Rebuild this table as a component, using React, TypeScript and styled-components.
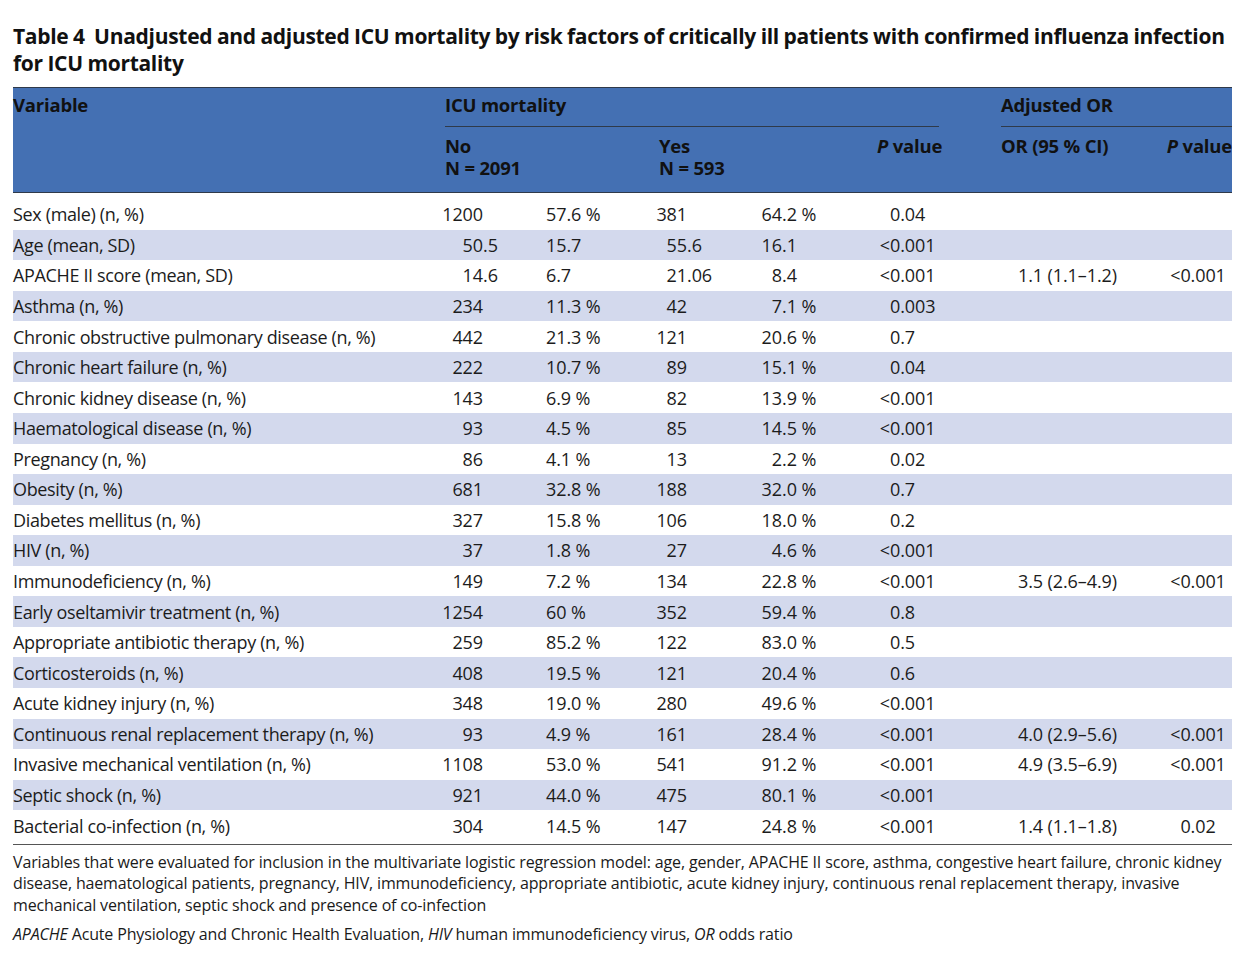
import { FC } from "react";
import styled, { createGlobalStyle } from "styled-components";

const GlobalStyle = createGlobalStyle`
  body {
    margin: 0;
    background: #ffffff;
    font-family: "Open Sans", "Noto Sans", sans-serif;
    color: #1a1a1a;
  }
`;

type Row = {
  label: string;
  noN: string;
  noPct: string;
  yesN: string;
  yesPct: string;
  p: string;
  or?: string;
  adjP?: string;
};

const rows: Row[] = [
  { label: "Sex (male) (n, %)", noN: "1200", noPct: "57.6 %", yesN: "381", yesPct: "64.2 %", p: "0.04" },
  { label: "Age (mean, SD)", noN: "50.5", noPct: "15.7", yesN: "55.6", yesPct: "16.1", p: "<0.001" },
  { label: "APACHE II score (mean, SD)", noN: "14.6", noPct: "6.7", yesN: "21.06", yesPct: "8.4", p: "<0.001", or: "1.1 (1.1–1.2)", adjP: "<0.001" },
  { label: "Asthma (n, %)", noN: "234", noPct: "11.3 %", yesN: "42", yesPct: "7.1 %", p: "0.003" },
  { label: "Chronic obstructive pulmonary disease (n, %)", noN: "442", noPct: "21.3 %", yesN: "121", yesPct: "20.6 %", p: "0.7" },
  { label: "Chronic heart failure (n, %)", noN: "222", noPct: "10.7 %", yesN: "89", yesPct: "15.1 %", p: "0.04" },
  { label: "Chronic kidney disease (n, %)", noN: "143", noPct: "6.9 %", yesN: "82", yesPct: "13.9 %", p: "<0.001" },
  { label: "Haematological disease (n, %)", noN: "93", noPct: "4.5 %", yesN: "85", yesPct: "14.5 %", p: "<0.001" },
  { label: "Pregnancy (n, %)", noN: "86", noPct: "4.1 %", yesN: "13", yesPct: "2.2 %", p: "0.02" },
  { label: "Obesity (n, %)", noN: "681", noPct: "32.8 %", yesN: "188", yesPct: "32.0 %", p: "0.7" },
  { label: "Diabetes mellitus (n, %)", noN: "327", noPct: "15.8 %", yesN: "106", yesPct: "18.0 %", p: "0.2" },
  { label: "HIV (n, %)", noN: "37", noPct: "1.8 %", yesN: "27", yesPct: "4.6 %", p: "<0.001" },
  { label: "Immunodeficiency (n, %)", noN: "149", noPct: "7.2 %", yesN: "134", yesPct: "22.8 %", p: "<0.001", or: "3.5 (2.6–4.9)", adjP: "<0.001" },
  { label: "Early oseltamivir treatment (n, %)", noN: "1254", noPct: "60 %", yesN: "352", yesPct: "59.4 %", p: "0.8" },
  { label: "Appropriate antibiotic therapy (n, %)", noN: "259", noPct: "85.2 %", yesN: "122", yesPct: "83.0 %", p: "0.5" },
  { label: "Corticosteroids (n, %)", noN: "408", noPct: "19.5 %", yesN: "121", yesPct: "20.4 %", p: "0.6" },
  { label: "Acute kidney injury (n, %)", noN: "348", noPct: "19.0 %", yesN: "280", yesPct: "49.6 %", p: "<0.001" },
  { label: "Continuous renal replacement therapy (n, %)", noN: "93", noPct: "4.9 %", yesN: "161", yesPct: "28.4 %", p: "<0.001", or: "4.0 (2.9–5.6)", adjP: "<0.001" },
  { label: "Invasive mechanical ventilation (n, %)", noN: "1108", noPct: "53.0 %", yesN: "541", yesPct: "91.2 %", p: "<0.001", or: "4.9 (3.5–6.9)", adjP: "<0.001" },
  { label: "Septic shock (n, %)", noN: "921", noPct: "44.0 %", yesN: "475", yesPct: "80.1 %", p: "<0.001" },
  { label: "Bacterial co-infection (n, %)", noN: "304", noPct: "14.5 %", yesN: "147", yesPct: "24.8 %", p: "<0.001", or: "1.4 (1.1–1.8)", adjP: "0.02" },
];

// var | noN | noPct | yesN | yesPct | p | or | adjP
const COLUMNS = "432px 101px 113px 104px 114px 124px 159px 72px";

const Page = styled.div`
  width: 1219px;
  padding: 23px 0 0 13px;
`;

const Title = styled.h1`
  margin: 0;
  font-size: 21px;
  line-height: 27px;
  font-weight: 700;
  color: #111;
  letter-spacing: -0.3px;
  word-spacing: -0.5px;
`;

const Header = styled.div`
  margin-top: 10px;
  display: grid;
  grid-template-columns: ${COLUMNS};
  grid-template-rows: 39px 65px;
  background: #4470b3;
  border-top: 1.5px solid #2f3a4a;
  border-bottom: 1.5px solid #2f3a4a;
  font-size: 18.5px;
  font-weight: 700;
  letter-spacing: -0.2px;
  color: #111;
`;

const HeadCell = styled.div<{ $span?: number; $align?: "left" | "right"; $padRight?: number }>`
  grid-column: span ${(p) => p.$span ?? 1};
  text-align: ${(p) => p.$align ?? "left"};
  padding-right: ${(p) => p.$padRight ?? 0}px;
  padding-top: 8px;
  line-height: 22px;
  white-space: nowrap;
`;

const HeadLine = styled.div`
  height: 22px;
`;

const GroupCell = styled.div<{ $span: number; $lineEnd: number }>`
  grid-column: span ${(p) => p.$span};
  display: flex;
  flex-direction: column;
  padding-right: ${(p) => p.$lineEnd}px;
`;

const GroupLabel = styled.div`
  flex: 1;
  line-height: 22px;
  padding-top: 6px;
`;

const GroupRule = styled.div`
  height: 1px;
  background: #2f3a4a;
`;

const Body = styled.div`
  padding: 6px 0 3px;
  border-bottom: 1px solid #555;
`;

const BodyRow = styled.div<{ $striped: boolean }>`
  display: grid;
  grid-template-columns: ${COLUMNS};
  height: 30.57px;
  align-items: center;
  background: ${(p) => (p.$striped ? "#d3d9ed" : "transparent")};
  font-size: 18px;
  font-weight: 400;
  color: #1c1c1c;
`;

const LabelCell = styled.div`
  letter-spacing: -0.35px;
  white-space: nowrap;
`;

const Cell = styled.div<{ $align?: "left" | "center" | "right"; $padLeft?: number }>`
  text-align: ${(p) => p.$align ?? "left"};
  padding-left: ${(p) => p.$padLeft ?? 0}px;
  letter-spacing: -0.1px;
  white-space: nowrap;
`;

// whole-number part with a fixed right edge, so the decimal points line up
const IntPart = styled.span<{ $width: number }>`
  display: inline-flex;
  justify-content: flex-end;
  width: ${(p) => p.$width}px;
`;

const LessThan = styled.span`
  display: inline-block;
  width: 14px;
  margin-left: -14px;
  text-align: right;
`;

const Notes = styled.div`
  padding-top: 7px;
  font-size: 16px;
  line-height: 21.5px;
  letter-spacing: -0.15px;
  color: #1a1a1a;
`;

const NoteParagraph = styled.p`
  margin: 0 0 8px;
`;

const Decimal: FC<{ value: string; width: number }> = ({ value, width }) => {
  const dot = value.indexOf(".");
  const whole = dot === -1 ? value : value.slice(0, dot);
  const rest = dot === -1 ? "" : value.slice(dot);
  return (
    <>
      <IntPart $width={width}>{whole}</IntPart>
      {rest}
    </>
  );
};

const PValue: FC<{ value: string }> = ({ value }) =>
  value.startsWith("<") ? (
    <>
      <LessThan>&lt;</LessThan>
      {value.slice(1)}
    </>
  ) : (
    <>{value}</>
  );

const App: FC = () => (
  <Page>
    <GlobalStyle />
    <Title>
      Table 4&nbsp; Unadjusted and adjusted ICU mortality by risk factors of critically ill patients with confirmed
      influenza infection for ICU mortality
    </Title>

    <Header>
      <HeadCell style={{ paddingTop: 0 }}>
        <GroupLabel>Variable</GroupLabel>
      </HeadCell>
      <GroupCell $span={5} $lineEnd={62}>
        <GroupLabel>ICU mortality</GroupLabel>
        <GroupRule />
      </GroupCell>
      <GroupCell $span={2} $lineEnd={0}>
        <GroupLabel>Adjusted OR</GroupLabel>
        <GroupRule />
      </GroupCell>

      <HeadCell />
      <HeadCell $span={2}>
        <HeadLine>No</HeadLine>
        <HeadLine>N = 2091</HeadLine>
      </HeadCell>
      <HeadCell $span={2}>
        <HeadLine>Yes</HeadLine>
        <HeadLine>N = 593</HeadLine>
      </HeadCell>
      <HeadCell $align="right" $padRight={65}>
        <i>P</i> value
      </HeadCell>
      <HeadCell>OR (95 % CI)</HeadCell>
      <HeadCell $align="right">
        <i>P</i> value
      </HeadCell>
    </Header>

    <Body>
      {rows.map((r, i) => (
        <BodyRow key={r.label} $striped={i % 2 === 1}>
          <LabelCell>{r.label}</LabelCell>
          <Cell>
            <Decimal value={r.noN} width={38} />
          </Cell>
          <Cell>{r.noPct}</Cell>
          <Cell>
            <Decimal value={r.yesN} width={28} />
          </Cell>
          <Cell>
            <Decimal value={r.yesPct} width={19} />
          </Cell>
          <Cell $padLeft={13}>
            <PValue value={r.p} />
          </Cell>
          <Cell $padLeft={17}>{r.or}</Cell>
          <Cell $align="center" style={{ paddingLeft: 4 }}>{r.adjP}</Cell>
        </BodyRow>
      ))}
    </Body>

    <Notes>
      <NoteParagraph>
        Variables that were evaluated for inclusion in the multivariate logistic regression model: age, gender, APACHE II
        score, asthma, congestive heart failure, chronic kidney disease, haematological patients, pregnancy, HIV,
        immunodeficiency, appropriate antibiotic, acute kidney injury, continuous renal replacement therapy, invasive
        mechanical ventilation, septic shock and presence of co-infection
      </NoteParagraph>
      <NoteParagraph>
        <i>APACHE</i> Acute Physiology and Chronic Health Evaluation, <i>HIV</i> human immunodeficiency virus,{" "}
        <i>OR</i> odds ratio
      </NoteParagraph>
    </Notes>
  </Page>
);

export default App;
